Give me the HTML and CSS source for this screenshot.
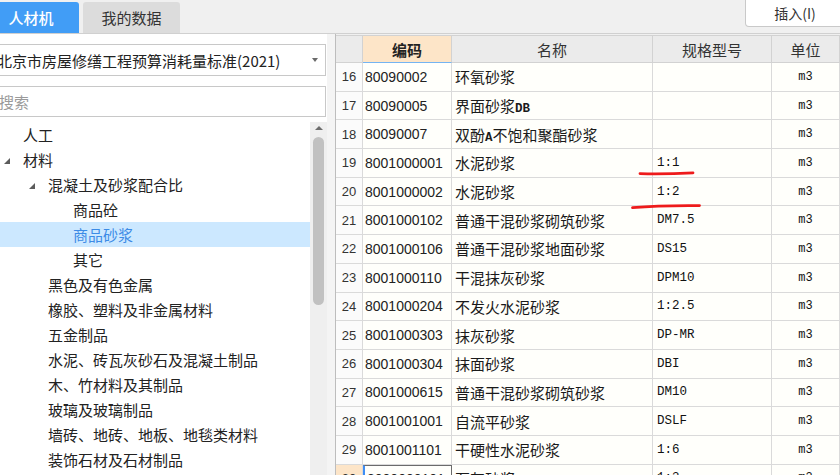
FILE: index.html
```html
<!DOCTYPE html>
<html lang="zh-CN">
<head>
<meta charset="utf-8">
<title>人材机</title>
<link rel="stylesheet" href="styles.css">
</head>
<body>
<div class="app">
  <header class="topbar">
    <div class="tab tab-active">人材机</div>
    <div class="tab">我的数据</div>
    <button class="insert-btn">插入(I)</button>
  </header>
  <main class="main">
    <aside class="left">
      <div class="select"><span class="select-text">北京市房屋修缮工程预算消耗量标准(2021)</span><span class="select-arrow"></span></div>
      <div class="search">搜索</div>
      <div class="tree-wrap">
        <ul class="tree">
          <li class="node l1"><span class="twisty"></span>人工</li>
          <li class="node l1"><span class="twisty"><span class="caret"></span></span>材料</li>
          <li class="node l2"><span class="twisty"><span class="caret"></span></span>混凝土及砂浆配合比</li>
          <li class="node l3"><span class="twisty"></span>商品砼</li>
          <li class="node l3 selected"><span class="twisty"></span>商品砂浆</li>
          <li class="node l3"><span class="twisty"></span>其它</li>
          <li class="node l2"><span class="twisty"></span>黑色及有色金属</li>
          <li class="node l2"><span class="twisty"></span>橡胶、塑料及非金属材料</li>
          <li class="node l2"><span class="twisty"></span>五金制品</li>
          <li class="node l2"><span class="twisty"></span>水泥、砖瓦灰砂石及混凝土制品</li>
          <li class="node l2"><span class="twisty"></span>木、竹材料及其制品</li>
          <li class="node l2"><span class="twisty"></span>玻璃及玻璃制品</li>
          <li class="node l2"><span class="twisty"></span>墙砖、地砖、地板、地毯类材料</li>
          <li class="node l2"><span class="twisty"></span>装饰石材及石材制品</li>
        </ul>
        <div class="vscroll"><span class="up"></span><span class="thumb"></span></div>
      </div>
    </aside>
    <div class="splitter"></div>
    <section class="grid-panel">
      <div class="row head">
        <div class="cell"></div>
        <div class="cell sorted">编码</div>
        <div class="cell">名称</div>
        <div class="cell">规格型号</div>
        <div class="cell">单位</div>
      </div>
      <div class="row"><div class="cell num">16</div><div class="cell code">80090002</div><div class="cell name"><span>环氧砂浆</span></div><div class="cell spec"></div><div class="cell unit">m3</div></div>
      <div class="row"><div class="cell num">17</div><div class="cell code">80090005</div><div class="cell name"><span>界面砂浆<span class="latin">DB</span></span></div><div class="cell spec"></div><div class="cell unit">m3</div></div>
      <div class="row"><div class="cell num">18</div><div class="cell code">80090007</div><div class="cell name"><span>双酚<span class="latin">A</span>不饱和聚酯砂浆</span></div><div class="cell spec"></div><div class="cell unit">m3</div></div>
      <div class="row"><div class="cell num">19</div><div class="cell code">8001000001</div><div class="cell name"><span>水泥砂浆</span></div><div class="cell spec">1:1</div><div class="cell unit">m3</div></div>
      <div class="row"><div class="cell num">20</div><div class="cell code">8001000002</div><div class="cell name"><span>水泥砂浆</span></div><div class="cell spec">1:2</div><div class="cell unit">m3</div></div>
      <div class="row"><div class="cell num">21</div><div class="cell code">8001000102</div><div class="cell name"><span>普通干混砂浆砌筑砂浆</span></div><div class="cell spec">DM7.5</div><div class="cell unit">m3</div></div>
      <div class="row"><div class="cell num">22</div><div class="cell code">8001000106</div><div class="cell name"><span>普通干混砂浆地面砂浆</span></div><div class="cell spec">DS15</div><div class="cell unit">m3</div></div>
      <div class="row"><div class="cell num">23</div><div class="cell code">8001000110</div><div class="cell name"><span>干混抹灰砂浆</span></div><div class="cell spec">DPM10</div><div class="cell unit">m3</div></div>
      <div class="row"><div class="cell num">24</div><div class="cell code">8001000204</div><div class="cell name"><span>不发火水泥砂浆</span></div><div class="cell spec">1:2.5</div><div class="cell unit">m3</div></div>
      <div class="row"><div class="cell num">25</div><div class="cell code">8001000303</div><div class="cell name"><span>抹灰砂浆</span></div><div class="cell spec">DP-MR</div><div class="cell unit">m3</div></div>
      <div class="row"><div class="cell num">26</div><div class="cell code">8001000304</div><div class="cell name"><span>抹面砂浆</span></div><div class="cell spec">DBI</div><div class="cell unit">m3</div></div>
      <div class="row"><div class="cell num">27</div><div class="cell code">8001000615</div><div class="cell name"><span>普通干混砂浆砌筑砂浆</span></div><div class="cell spec">DM10</div><div class="cell unit">m3</div></div>
      <div class="row"><div class="cell num">28</div><div class="cell code">8001001001</div><div class="cell name"><span>自流平砂浆</span></div><div class="cell spec">DSLF</div><div class="cell unit">m3</div></div>
      <div class="row"><div class="cell num">29</div><div class="cell code">8001001101</div><div class="cell name"><span>干硬性水泥砂浆</span></div><div class="cell spec">1:6</div><div class="cell unit">m3</div></div>
      <div class="row current"><div class="cell num">30</div><div class="cell code active">8000000101</div><div class="cell name"><span>石灰砂浆</span></div><div class="cell spec">1:3</div><div class="cell unit">m3</div></div>
    </section>
  </main>
  <svg class="marks" width="840" height="475" viewBox="0 0 840 475">
    <path d="M640 173.6 Q 665 174.2 693 172.8" />
    <path d="M632.5 207.6 Q 660 205.2 699.5 205.6" />
  </svg>
</div>
</body>
</html>
```

FILE: styles.css
```css
* { box-sizing: border-box; margin: 0; padding: 0; }

html, body { width: 840px; height: 475px; overflow: hidden; }

body {
  background: #f0f0f0;
  font-family: "Noto Sans CJK SC", "Noto Sans", sans-serif;
  color: #222;
}

.app {
  position: relative;
  width: 840px;
  height: 475px;
  display: flex;
  flex-direction: column;
  overflow: hidden;
}

/* top bar */
.topbar {
  flex: none;
  height: 33px;
  margin-left: -17px;
  display: flex;
  align-items: flex-end;
  gap: 4px;
}

.tab {
  width: 97px;
  height: 31px;
  border-radius: 3px 3px 0 0;
  background: #dcdcdc;
  color: #333;
  font-size: 15px;
  line-height: 31px;
  text-align: center;
}

.tab-active {
  width: 96px;
  background: #419df6;
  color: #fff;
  font-weight: 500;
}

.insert-btn {
  align-self: flex-start;
  margin-left: auto;
  margin-right: -5px;
  width: 100px;
  height: 27px;
  background: #fff;
  border: 1px solid #c9c9c9;
  border-top: none;
  border-radius: 0 0 0 4px;
  font: 14px "Noto Sans CJK SC", sans-serif;
  color: #333;
}

/* main */
.main {
  flex: 1;
  min-height: 0;
  display: flex;
  border-top: 1px solid #d0d0d0;
}

.left {
  flex: none;
  width: 327px;
  background: #fff;
  display: flex;
  flex-direction: column;
  overflow: hidden;
}

.select {
  flex: none;
  margin: 10px 0 0 -10px;
  width: 336px;
  height: 32px;
  border: 1px solid #c8c8c8;
  display: flex;
  align-items: center;
  padding-left: 6px;
  font-size: 15px;
  color: #222;
  white-space: nowrap;
}

.select-arrow {
  margin-left: auto;
  margin-right: 7px;
  width: 0;
  height: 0;
  border-left: 3.5px solid transparent;
  border-right: 3.5px solid transparent;
  border-top: 4px solid #6a6a6a;
}

.search {
  flex: none;
  margin: 10px 0 0 -10px;
  width: 336px;
  height: 31px;
  border: 1px solid #c8c8c8;
  padding-left: 8px;
  line-height: 29px;
  font-size: 15px;
  color: #9a9a9a;
}

.tree-wrap {
  flex: 1;
  min-height: 0;
  margin-top: 5px;
  display: flex;
}

.tree {
  flex: 1;
  list-style: none;
}

.node {
  height: 25px;
  display: flex;
  align-items: center;
  font-size: 15px;
  color: #222;
  white-space: nowrap;
}

.l1 { padding-left: 4px; }
.l2 { padding-left: 29px; }
.l3 { padding-left: 54px; }

.twisty {
  flex: none;
  width: 19px;
  display: flex;
  align-items: center;
}

.caret {
  width: 0;
  height: 0;
  margin-top: 3px;
  border-left: 6px solid transparent;
  border-bottom: 6px solid #5c5c5c;
}

.selected {
  background: #cce8ff;
  color: #3c8be6;
}

.vscroll {
  flex: none;
  width: 17px;
  background: #efefef;
  display: flex;
  flex-direction: column;
  align-items: center;
}

.up {
  margin-top: 4px;
  width: 0;
  height: 0;
  border-left: 4px solid transparent;
  border-right: 4px solid transparent;
  border-bottom: 4px solid #6d6d6d;
}

.thumb {
  margin-top: 7px;
  width: 11px;
  height: 168px;
  border-radius: 6px;
  background: #c1c1c1;
}

.splitter {
  flex: none;
  width: 9px;
  background: #f4f4f4;
  border-right: 1px solid #bdbdbd;
}

/* grid */
.grid-panel {
  flex: 1;
  min-width: 0;
  padding-top: 1px;
  background: #f0f0f0;
  overflow: hidden;
}

.row {
  display: grid;
  grid-template-columns: 27px 89px 201px 119px 68px;
  height: 28.7px;
}

.cell {
  display: flex;
  align-items: center;
  overflow: hidden;
  white-space: nowrap;
  background: #fffffb;
  border-right: 1px solid #dadada;
  border-bottom: 1px solid #dadada;
}

.head { height: 28px; }

.head .cell {
  justify-content: center;
  background: #ebebeb;
  border-top: 1px solid #cbcbcb;
  border-color: #d2d2d2;
  font-size: 15px;
  color: #333;
}

.head .sorted {
  background: #fde5c8;
  font-weight: bold;
  color: #222;
  border-bottom: 1px solid #74b4f2;
}

.num {
  justify-content: center;
  background: #fbfbfb;
  font: 13px "Liberation Sans", Arial, sans-serif;
  color: #333;
}

.code {
  padding-left: 2px;
  font: 14px "Liberation Sans", Arial, sans-serif;
  color: #222;
}

.name {
  padding-left: 3px;
  font-size: 15px;
  color: #1a1a1a;
}

.latin {
  font-family: "Liberation Mono", monospace;
  font-size: 12.5px;
  font-weight: bold;
}

.spec {
  padding-left: 4px;
  font: 12.5px "Liberation Mono", monospace;
  color: #111;
}

.unit {
  justify-content: center;
  font: 12px "Liberation Mono", monospace;
  color: #111;
}

.current .num { background: #fde5c8; }

.active {
  border: 1px solid #6b6b6b;
  border-left: 2px solid #3d8ef5;
}

/* red hand-drawn annotations */
.marks {
  position: absolute;
  left: 0;
  top: 0;
  pointer-events: none;
}

.marks path {
  fill: none;
  stroke: #ee1b1b;
  stroke-width: 2.8;
  stroke-linecap: round;
}
```
